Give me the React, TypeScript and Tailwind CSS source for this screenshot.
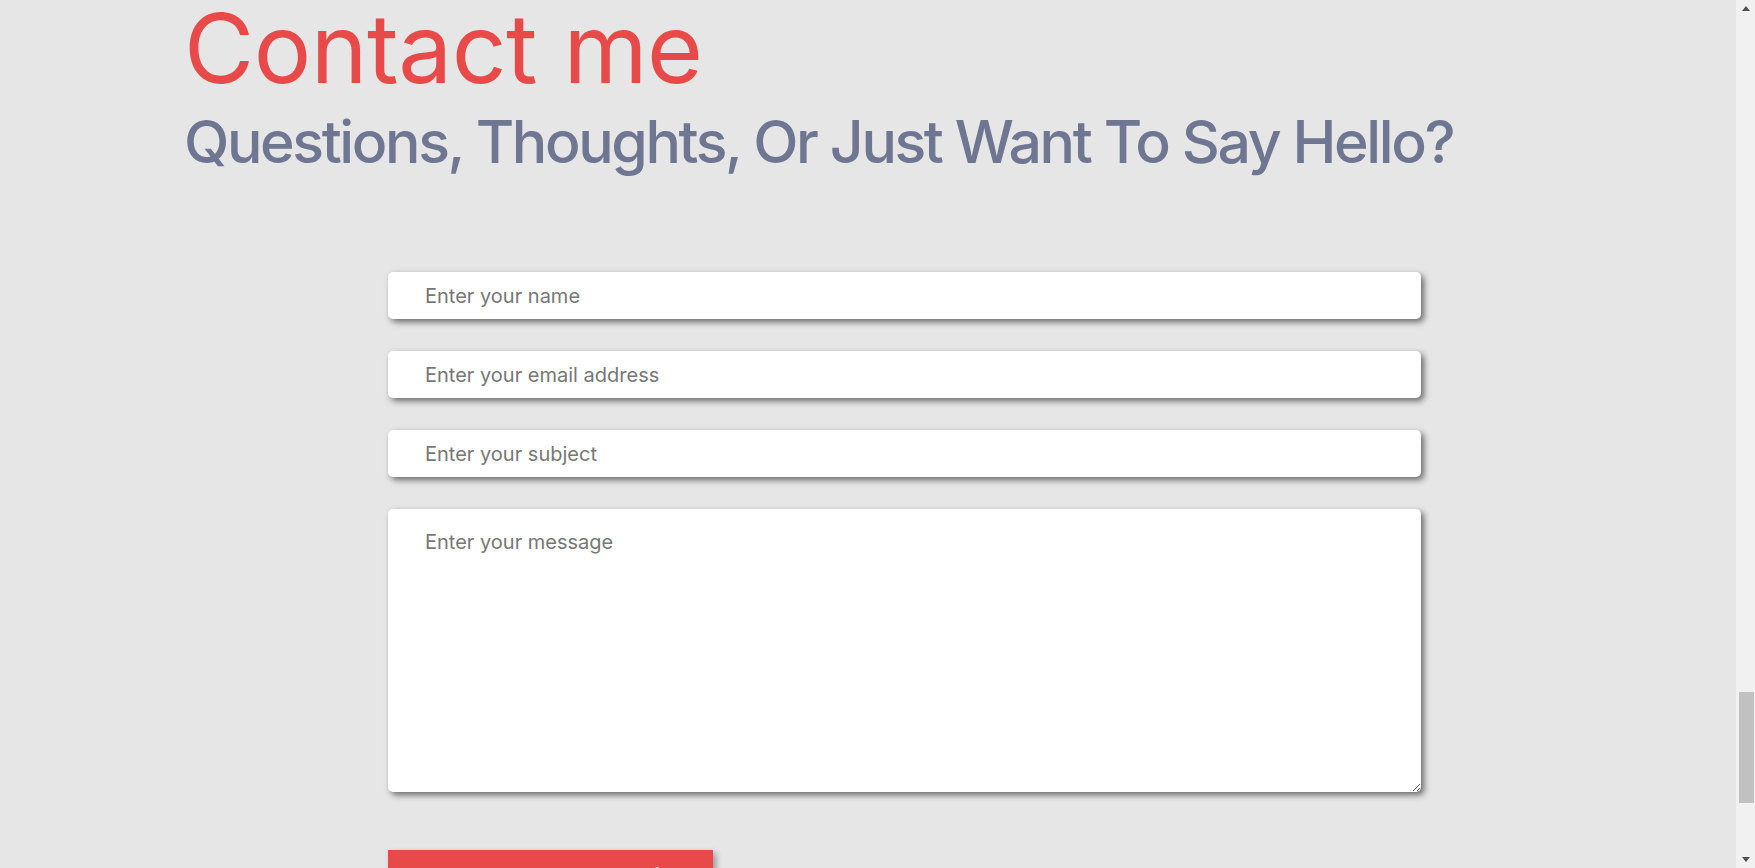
const fieldClass =
  "w-full h-[47px] bg-white rounded-[5px] pl-[37px] pr-4 text-[20px] text-[#555] placeholder:text-[#777] outline-none shadow-[3px_3px_6px_rgba(0,0,0,0.55)]";

const ContactForm = () => {
  return (
    <form className="flex flex-col gap-[32px] w-[1033px] ml-[204px] mt-[101px]">
      <input type="text" placeholder="Enter your name" className={fieldClass} />
      <input type="email" placeholder="Enter your email address" className={fieldClass} />
      <input type="text" placeholder="Enter your subject" className={fieldClass} />
      <textarea
        placeholder="Enter your message"
        className="w-full h-[283px] shrink-0 bg-white rounded-[5px] pl-[37px] pr-4 pt-[18px] text-[20px] text-[#555] placeholder:text-[#777] outline-none shadow-[3px_3px_6px_rgba(0,0,0,0.55)]"
      />
      <button
        type="button"
        className="mt-[26px] w-[325px] h-[56px] shrink-0 bg-[#e84a4a] text-white text-[22px] flex items-center pl-[79px] gap-[14px] shadow-[3px_3px_6px_rgba(0,0,0,0.35)]"
      >
        <span>Send Message</span>
        <svg width="24" height="24" viewBox="0 0 24 24" fill="white">
          {/* paper plane, tip at top right */}
          <path d="M23.5 0.5L0.5 10.5l7 3.2L20 3.5 9.5 15.2v7.3l4-5 5 3z" />
        </svg>
      </button>
    </form>
  );
};

// browser scrollbar as seen in the shot, page scrolled near the bottom
const ScrollBar = () => (
  <aside className="w-[19px] h-full bg-[#f1f1f1] flex flex-col items-center shrink-0">
    <div className="h-[17px] flex items-center justify-center">
      <div className="w-0 h-0 border-x-[4px] border-x-transparent border-b-[5px] border-b-[#505050]" />
    </div>
    <div className="flex-1" />
    <div className="w-[15px] h-[111px] bg-[#c1c1c1] ml-[2px]" />
    <div className="h-[48px]" />
    <div className="h-[17px] flex items-center justify-center">
      <div className="w-0 h-0 border-x-[4px] border-x-transparent border-t-[5px] border-t-[#505050]" />
    </div>
  </aside>
);

export default function App() {
  return (
    <div
      className="h-screen flex bg-[#e6e6e6] overflow-hidden"
      style={{ fontFamily: "Inter, 'Noto Sans', sans-serif" }}
    >
      <main className="flex-1 pl-[184px]">
        <h1 className="text-[96px] leading-none text-[#e84a4a] tracking-[-0.5px]">Contact me</h1>
        <h2 className="mt-[16px] text-[59px] leading-none font-medium text-[#6f7692] tracking-[-2.4px] whitespace-nowrap">
          Questions, Thoughts, Or Just Want To Say Hello?
        </h2>
        <ContactForm />
      </main>
      <ScrollBar />
    </div>
  );
}
